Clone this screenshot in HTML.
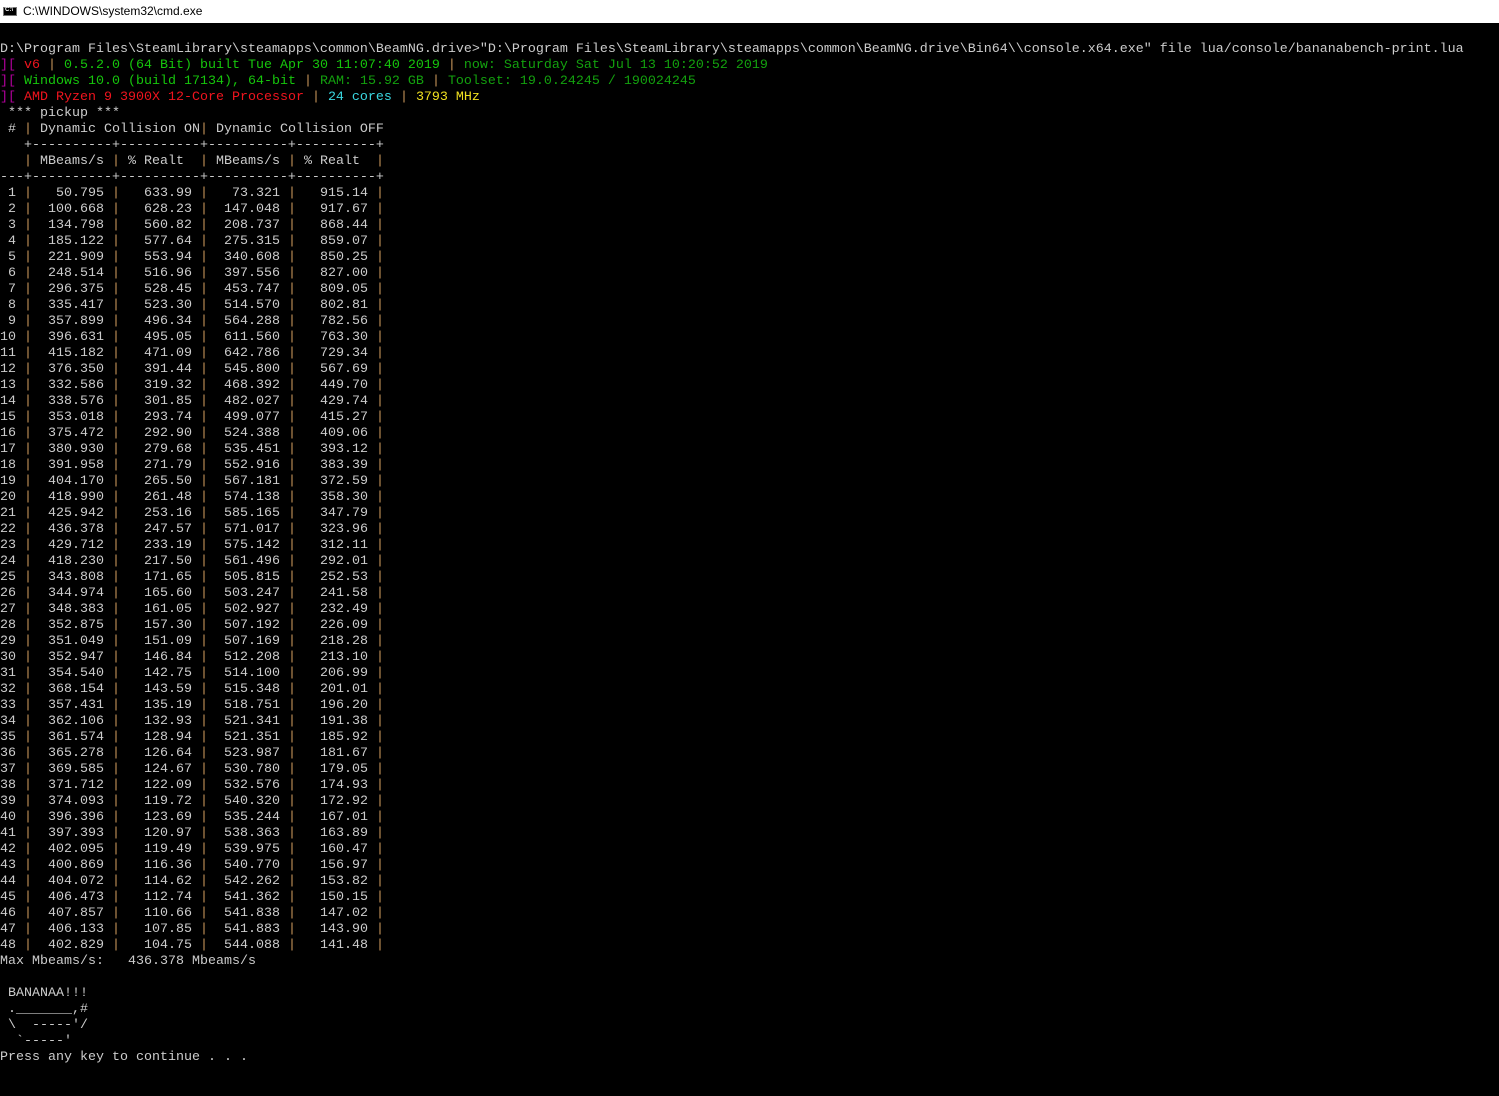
<!DOCTYPE html>
<html><head><meta charset="utf-8"><style>
html,body{margin:0;padding:0;background:#000;width:1499px;height:1096px;overflow:hidden}
#tb{position:absolute;left:0;top:0;width:1499px;height:23px;background:#fff}
#ic{position:absolute;left:3px;top:7px;width:14px;height:9px;background:#000;border:1px solid #777;box-sizing:border-box}
#ic span{position:absolute;left:1px;top:-1px;font:bold 6px "Liberation Sans",sans-serif;color:#fff}
#tt{position:absolute;left:23px;top:4px;font:12px "Liberation Sans",sans-serif;color:#000}
pre{position:absolute;left:0;top:42px;margin:0;font-family:"Liberation Mono",monospace;font-size:13.33px;line-height:16px;color:#cccccc;white-space:pre}
.p{color:#c8965a}.m{color:#b4009e}.r{color:#f0141e}.g{color:#16c60c}.d{color:#13a10e}.c{color:#3ad6e0}.y{color:#f0e020}
</style></head><body>
<div id="tb"><div id="ic"><span>C:\</span></div><div id="tt">C:\WINDOWS\system32\cmd.exe</div></div>
<pre>D:\Program Files\SteamLibrary\steamapps\common\BeamNG.drive&gt;"D:\Program Files\SteamLibrary\steamapps\common\BeamNG.drive\Bin64\\console.x64.exe" file lua/console/bananabench-print.lua
<span class="m">][</span> <span class="r">v6</span> <span class="p">|</span> <span class="g">0.5.2.0 (64 Bit) built Tue Apr 30 11:07:40 2019</span> <span class="p">|</span> <span class="d">now: Saturday Sat Jul 13 10:20:52 2019</span>
<span class="m">][</span> <span class="g">Windows 10.0 (build 17134), 64-bit</span> <span class="p">|</span> <span class="d">RAM: 15.92 GB</span> <span class="p">|</span> <span class="d">Toolset: 19.0.24245 / 190024245</span>
<span class="m">][</span> <span class="r">AMD Ryzen 9 3900X 12-Core Processor</span> <span class="p">|</span> <span class="c">24 cores</span> <span class="p">|</span> <span class="y">3793 MHz</span>
 *** pickup ***
 # <span class="p">|</span> Dynamic Collision ON<span class="p">|</span> Dynamic Collision OFF
   +----------+----------+----------+----------+
   <span class="p">|</span> MBeams/s <span class="p">|</span> % Realt  <span class="p">|</span> MBeams/s <span class="p">|</span> % Realt  <span class="p">|</span>
---+----------+----------+----------+----------+
<span id="rows"></span>Max Mbeams/s:   436.378 Mbeams/s

 BANANAA!!!
 ._______,#
 \  -----'/
  `-----'
Press any key to continue . . .</pre>
<script>
var d=[[50.795,633.99,73.321,915.14],[100.668,628.23,147.048,917.67],[134.798,560.82,208.737,868.44],[185.122,577.64,275.315,859.07],[221.909,553.94,340.608,850.25],[248.514,516.96,397.556,827.00],[296.375,528.45,453.747,809.05],[335.417,523.30,514.570,802.81],[357.899,496.34,564.288,782.56],[396.631,495.05,611.560,763.30],[415.182,471.09,642.786,729.34],[376.350,391.44,545.800,567.69],[332.586,319.32,468.392,449.70],[338.576,301.85,482.027,429.74],[353.018,293.74,499.077,415.27],[375.472,292.90,524.388,409.06],[380.930,279.68,535.451,393.12],[391.958,271.79,552.916,383.39],[404.170,265.50,567.181,372.59],[418.990,261.48,574.138,358.30],[425.942,253.16,585.165,347.79],[436.378,247.57,571.017,323.96],[429.712,233.19,575.142,312.11],[418.230,217.50,561.496,292.01],[343.808,171.65,505.815,252.53],[344.974,165.60,503.247,241.58],[348.383,161.05,502.927,232.49],[352.875,157.30,507.192,226.09],[351.049,151.09,507.169,218.28],[352.947,146.84,512.208,213.10],[354.540,142.75,514.100,206.99],[368.154,143.59,515.348,201.01],[357.431,135.19,518.751,196.20],[362.106,132.93,521.341,191.38],[361.574,128.94,521.351,185.92],[365.278,126.64,523.987,181.67],[369.585,124.67,530.780,179.05],[371.712,122.09,532.576,174.93],[374.093,119.72,540.320,172.92],[396.396,123.69,535.244,167.01],[397.393,120.97,538.363,163.89],[402.095,119.49,539.975,160.47],[400.869,116.36,540.770,156.97],[404.072,114.62,542.262,153.82],[406.473,112.74,541.362,150.15],[407.857,110.66,541.838,147.02],[406.133,107.85,541.883,143.90],[402.829,104.75,544.088,141.48]];
function pad(s,n){s=String(s);while(s.length<n)s=' '+s;return s}
var P='<span class="p">|</span>',h='';
d.forEach(function(r,i){h+=pad(i+1,2)+' '+P+' '+pad(r[0].toFixed(3),8)+' '+P+' '+pad(r[1].toFixed(2),8)+' '+P+' '+pad(r[2].toFixed(3),8)+' '+P+' '+pad(r[3].toFixed(2),8)+' '+P+'\n'});
document.getElementById('rows').innerHTML=h;
</script>
</body></html>
